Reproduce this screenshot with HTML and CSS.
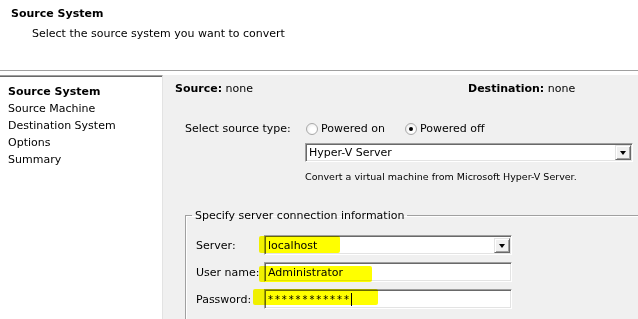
FILE: index.html
```html
<!DOCTYPE html>
<html lang="en">
<head>
    <meta charset="UTF-8">
    <title>Conversion - Source System</title>
    <link rel="stylesheet" href="styles.css">
</head>
<body>
<div class="header">
    <div class="title">Source System</div>
    <div class="subtitle">Select the source system you want to convert</div>
</div>
<div class="main">
    <ul class="steps">
        <li class="current">Source System</li>
        <li>Source Machine</li>
        <li>Destination System</li>
        <li>Options</li>
        <li>Summary</li>
    </ul>
    <div class="content">
        <div class="summary">
            <span><b>Source:</b> none</span>
            <span><b>Destination:</b> none</span>
        </div>
        <div class="type-row">
            <span class="type-label">Select source type:</span>
            <label class="radio"><span class="dot"></span>Powered on</label>
            <label class="radio"><span class="dot checked"></span>Powered off</label>
        </div>
        <div class="select">
            <span>Hyper-V Server</span>
            <span class="drop"></span>
        </div>
        <div class="hint">Convert a virtual machine from Microsoft Hyper-V Server.</div>
        <fieldset class="conn">
            <legend>Specify server connection information</legend>
            <div class="field-row">
                <span class="flabel">Server:</span>
                <div class="input">
                    <span>localhost</span>
                    <span class="drop"></span>
                    <span class="mark mark-server"></span>
                </div>
            </div>
            <div class="field-row">
                <span class="flabel">User name:</span>
                <div class="input">
                    <span>Administrator</span>
                    <span class="mark mark-user"></span>
                </div>
            </div>
            <div class="field-row">
                <span class="flabel">Password:</span>
                <div class="input">
                    <span class="stars">************</span><span class="caret"></span>
                    <span class="mark mark-pass"></span>
                </div>
            </div>
        </fieldset>
    </div>
</div>
</body>
</html>
```

FILE: styles.css
```css
body {
    margin: 0;
    width: 638px;
    height: 319px;
    overflow: hidden;
    background: #f0f0f0;
    font-family: "DejaVu Sans", sans-serif;
    font-size: 11px;
    line-height: 13px;
    color: #000;
}

.header {
    height: 71px;
    background: #fff;
    border-bottom: 1px solid #a0a0a0;
    box-sizing: border-box;
    padding: 7px 0 0 11px;
}

.title {
    font-weight: bold;
}

.subtitle {
    margin-top: 7px;
    padding-left: 21px;
}

.main {
    display: flex;
    height: 248px;
    border-top: 4px solid #fff;
    overflow: hidden;
}

.steps {
    list-style: none;
    margin: 0;
    padding: 7px 0 0 8px;
    width: 163px;
    box-sizing: border-box;
    background: #fff;
    border-top: 1px solid #a0a0a0;
    border-right: 1px solid #e3e3e3;
    box-shadow: inset 0 1px 0 #696969;
    line-height: 17px;
}

.steps .current {
    font-weight: bold;
}

.content {
    flex: 1;
    padding: 7px 0 0 12px;
    min-width: 0;
}

.summary {
    display: grid;
    grid-template-columns: 293px auto;
}

.type-row {
    display: flex;
    align-items: center;
    margin: 27px 0 0 10px;
    height: 13px;
}

.type-label {
    width: 121px;
}

.radio {
    display: flex;
    align-items: center;
    width: 99px;
}

.radio .dot {
    width: 12px;
    height: 12px;
    box-sizing: border-box;
    border: 1px solid #a9a9a9;
    border-radius: 50%;
    background: radial-gradient(circle at 60% 60%, #fff 30%, #e4e4e4 100%);
    margin-right: 3px;
    position: relative;
}

.radio .checked::after {
    content: "";
    position: absolute;
    left: 3px;
    top: 3px;
    width: 4px;
    height: 4px;
    border-radius: 50%;
    background: #000;
}

.select,
.input {
    position: relative;
    display: flex;
    align-items: center;
    box-sizing: border-box;
    background: #fff;
    border: 1px solid;
    border-color: #a0a0a0 #fff #fff #a0a0a0;
    box-shadow: inset 1px 1px 0 #696969, inset -1px -1px 0 #e3e3e3;
    padding-left: 3px;
}

.select {
    margin: 8px 0 0 130px;
    width: 328px;
    height: 19px;
}

.drop {
    margin-left: auto;
    margin-right: 1px;
    width: 16px;
    height: 15px;
    box-sizing: border-box;
    background: #f0f0f0;
    border: 1px solid;
    border-color: #e3e3e3 #696969 #696969 #e3e3e3;
    box-shadow: inset 1px 1px 0 #fff, inset -1px -1px 0 #a0a0a0;
    display: flex;
    align-items: center;
    justify-content: center;
}

.drop::after {
    content: "";
    border-left: 3.5px solid transparent;
    border-right: 3.5px solid transparent;
    border-top: 4px solid #000;
    margin-top: 1px;
}

.hint {
    margin: 9px 0 0 130px;
    font-size: 9.5px;
    line-height: 12px;
}

.conn {
    margin: 26px -20px 0 10px;
    padding: 13px 0 30px 10px;
    border: 1px solid #a0a0a0;
    border-right: none;
    border-bottom: none;
    box-shadow: inset 1px 1px 0 #fff;
}

.conn legend {
    padding: 0 3px;
    margin-left: -4px;
}

.field-row {
    display: flex;
    align-items: center;
    height: 20px;
    margin-bottom: 7px;
}

.flabel {
    width: 68px;
}

.input {
    width: 248px;
    height: 20px;
}

.input > span:first-child {
    position: relative;
}

.stars {
    font-size: 10px;
    letter-spacing: 1.9px;
}

.caret {
    display: inline-block;
    width: 1px;
    height: 13px;
    background: #000;
}

.mark {
    position: absolute;
    background: #ffff00;
    mix-blend-mode: multiply;
    border-radius: 2px;
}

.mark-server {
    left: -6px;
    top: 0;
    width: 81px;
    height: 17px;
}

.mark-user {
    left: -6px;
    top: 3px;
    width: 113px;
    height: 16px;
}

.mark-pass {
    left: -12px;
    top: -1px;
    width: 125px;
    height: 16px;
}
```
